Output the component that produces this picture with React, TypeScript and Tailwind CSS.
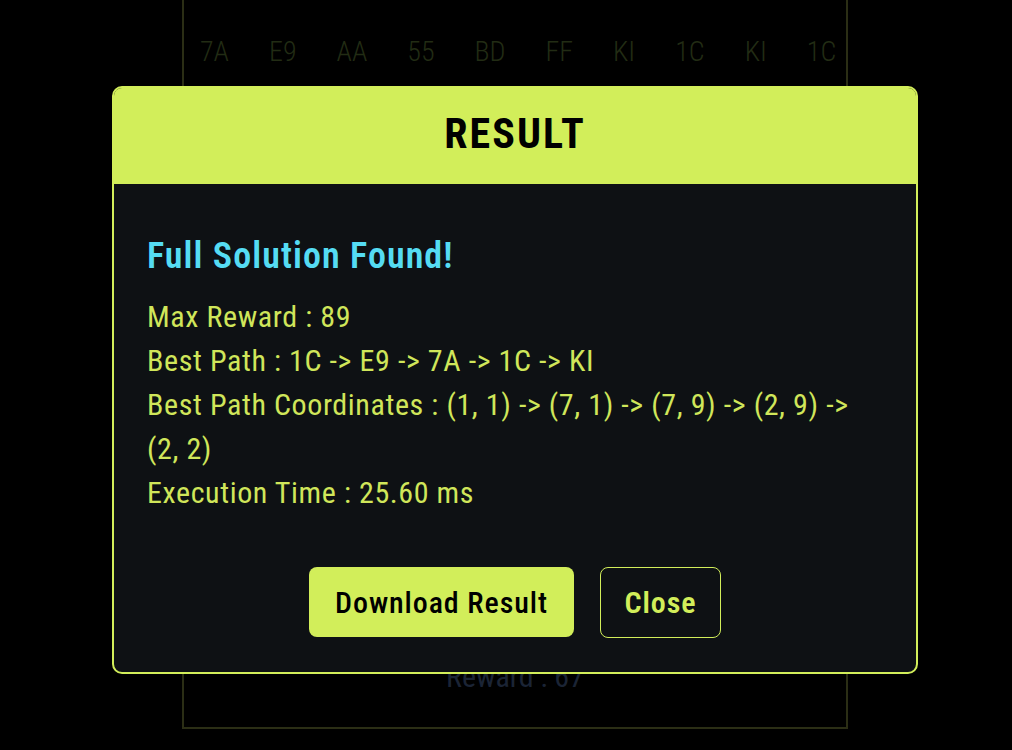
const gridRow = ["7A", "E9", "AA", "55", "BD", "FF", "KI", "1C", "KI", "1C"];

const details = [
  "Max Reward : 89",
  "Best Path : 1C -> E9 -> 7A -> 1C -> KI",
  "Best Path Coordinates : (1, 1) -> (7, 1) -> (7, 9) -> (2, 9) -> (2, 2)",
  "Execution Time : 25.60 ms",
];

function Board() {
  return (
    <div className="ml-[182px] flex h-[729px] w-[666px] flex-col border-2 border-t-0 border-[#2b2e15]">
      <div className="flex gap-[40px] pl-[16px] pt-[32px] text-[28px] font-light leading-[40px] text-[#222c14]">
        {gridRow.map((cell, i) => (
          <span key={i}>{cell}</span>
        ))}
      </div>
      <div className="flex-1" />
      <p className="pb-[28px] text-center text-[30px] leading-[44px] text-[#1b2435]">Reward : 67</p>
    </div>
  );
}

function ResultModal() {
  return (
    <div className="absolute left-[112px] top-[86px] flex w-[806px] flex-col overflow-hidden rounded-[10px] border-2 border-[#d2ee5a] bg-[#0e1114]">
      <div className="flex h-[96px] items-center justify-center bg-[#d2ee5a] pb-[6px]">
        <h2 className="text-[42px] font-bold tracking-wider text-black">RESULT</h2>
      </div>
      <div className="px-[33px] pb-[34px] pt-[50px]">
        <h3 className="text-[36px] font-semibold leading-[44px] tracking-[0.03em] text-[#55dcf3]">Full Solution Found!</h3>
        <div className="mt-[17px] text-[30px] leading-[44px] tracking-[0.02em] text-[#d0e65a]">
          {details.map((line) => (
            <p key={line}>{line}</p>
          ))}
        </div>
        <div className="mt-[52px] flex justify-center gap-[26px]">
          <button className="h-[70px] w-[265px] rounded-[8px] bg-[#d2ee5a] text-[30px] font-medium tracking-[0.03em] text-black">
            Download Result
          </button>
          <button className="h-[71px] w-[121px] rounded-[8px] border border-[#d2ee5a] text-[30px] font-semibold tracking-[0.03em] text-[#d2ee5a]">
            Close
          </button>
        </div>
      </div>
    </div>
  );
}

export default function App() {
  return (
    <div className="relative h-[750px] overflow-hidden bg-black [font-family:'Roboto_Condensed',Roboto,sans-serif]">
      <Board />
      <ResultModal />
    </div>
  );
}
